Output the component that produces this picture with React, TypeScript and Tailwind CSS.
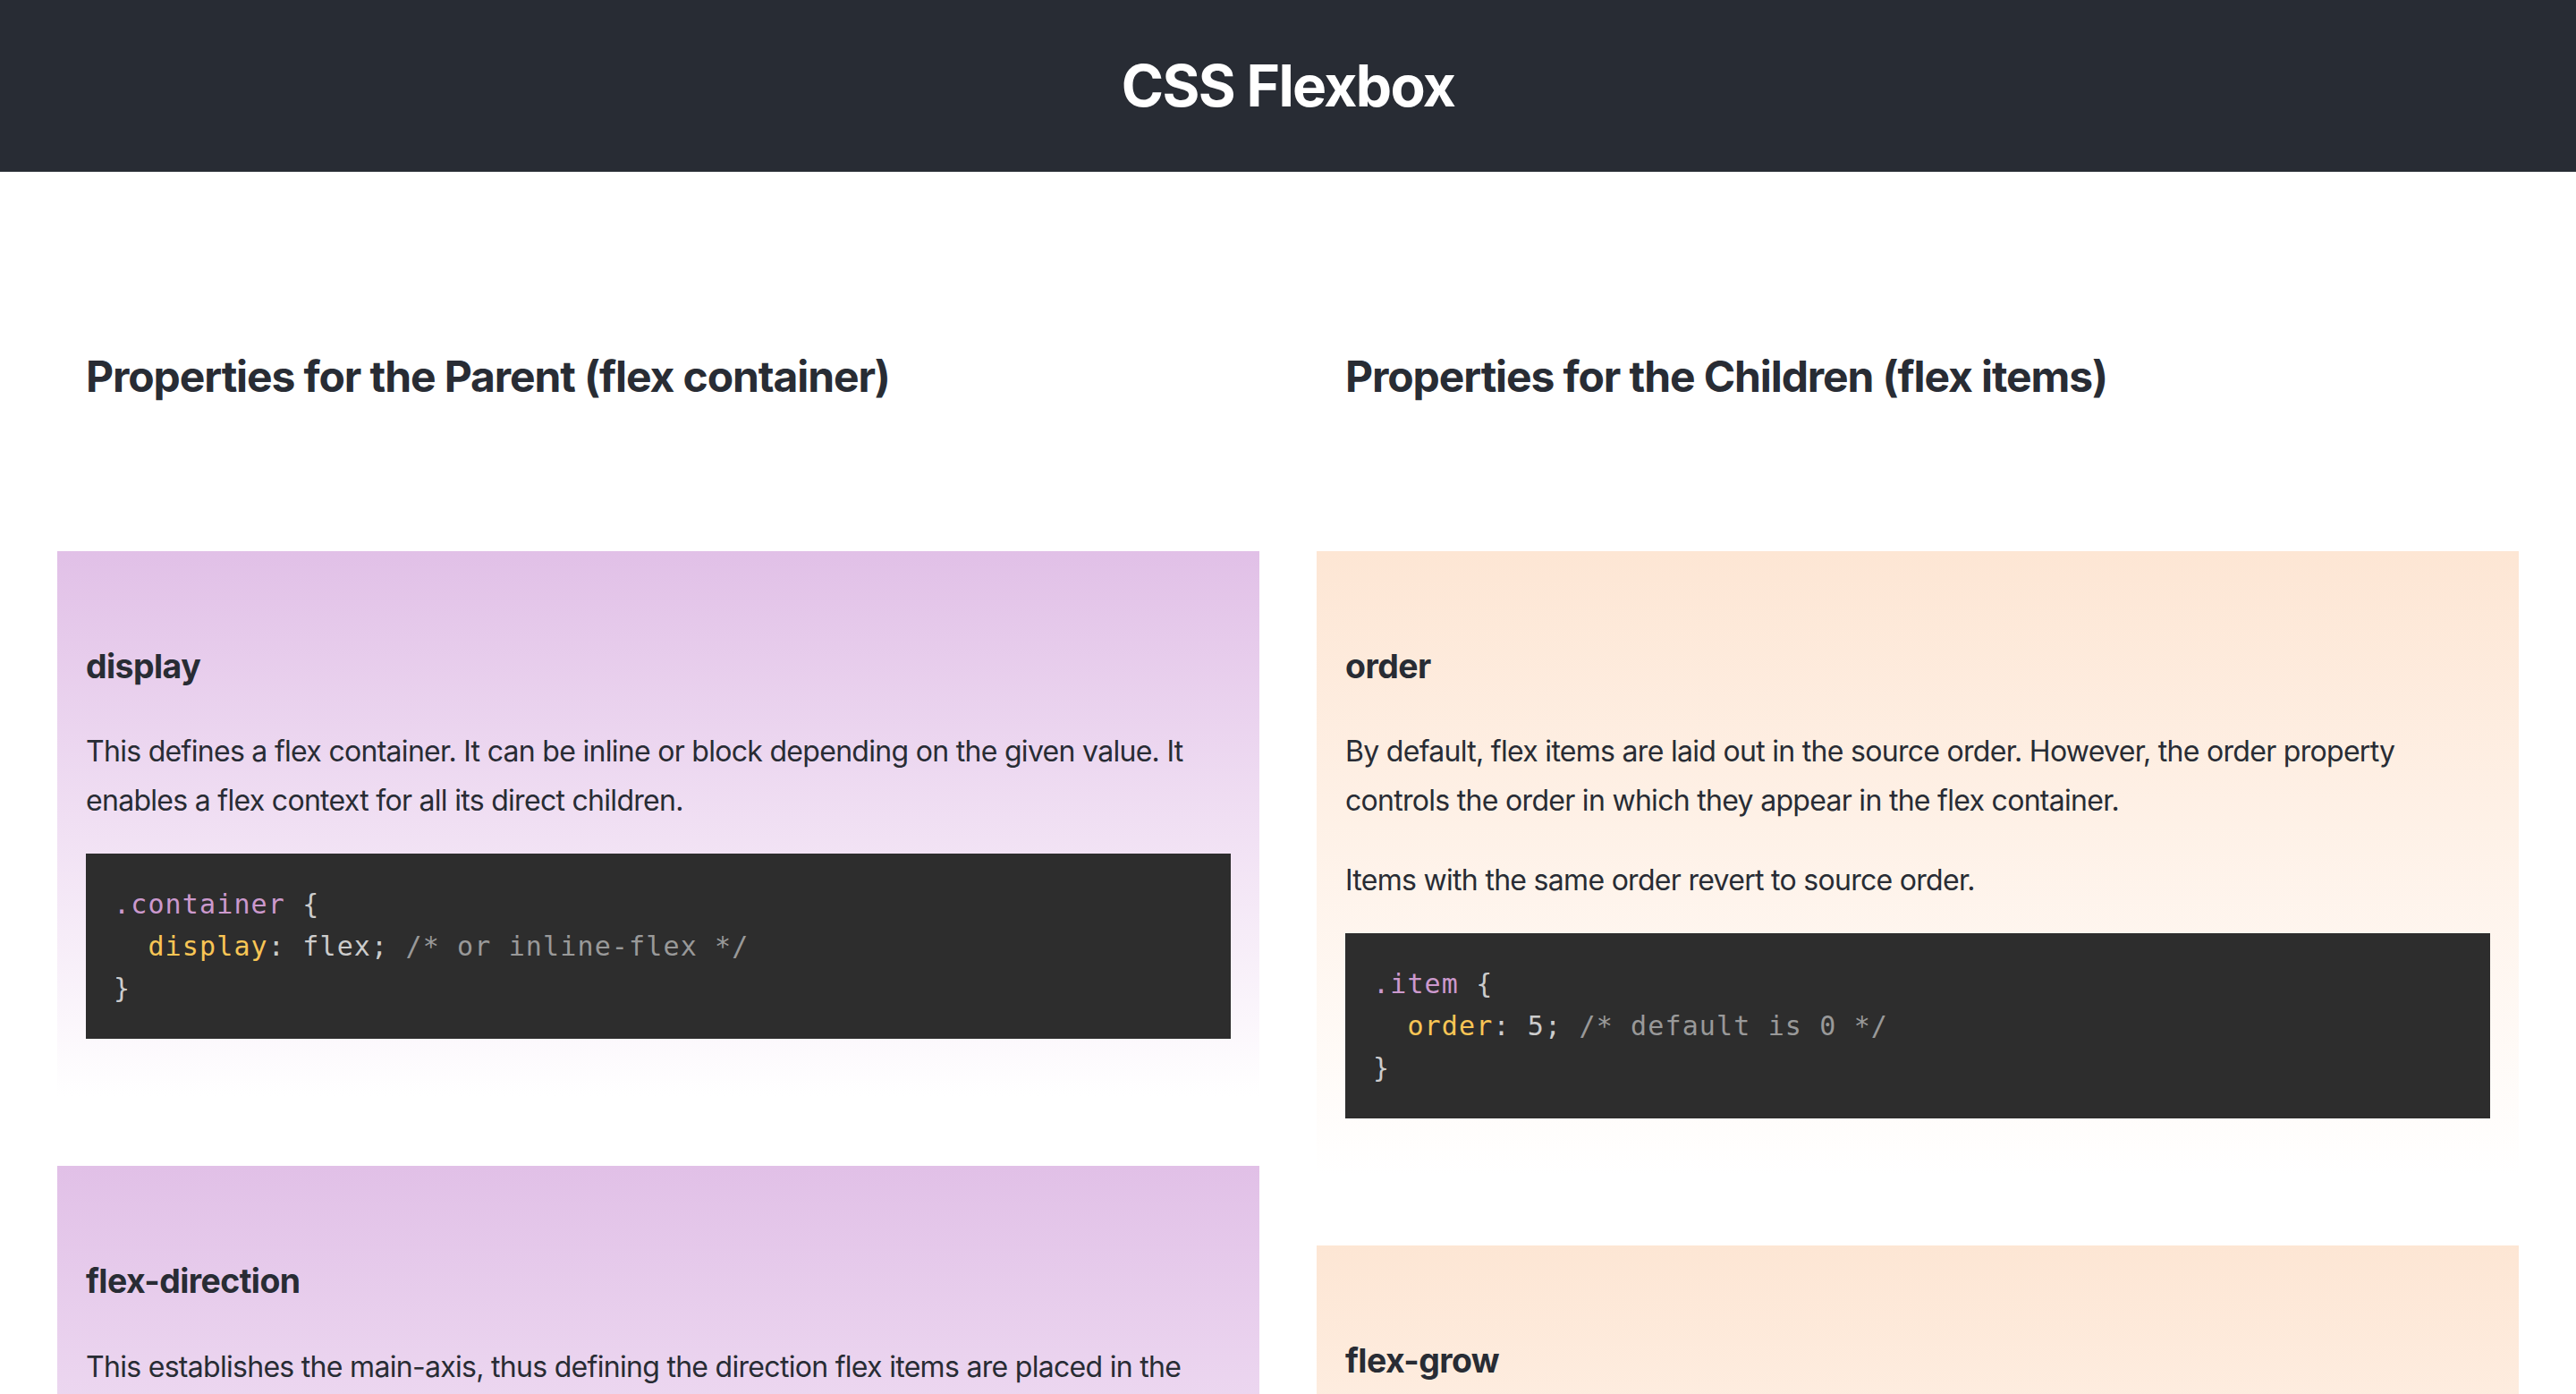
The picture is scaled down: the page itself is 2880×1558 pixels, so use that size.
import React from "react";

type Tok = { t: string; c?: string };

const SEL = "text-[#cc99cd]";
const PROP = "text-[#f8c555]";
const COM = "text-[#999999]";

function Code({ lines }: { lines: Tok[][] }) {
  return (
    <pre
      className="bg-[#2d2d2d] text-[#cccccc] px-[31px] py-[33px] text-[30px] leading-[47px] tracking-[0.038em] whitespace-pre overflow-hidden"
      style={{ fontFamily: '"DejaVu Sans Mono", "Liberation Mono", monospace' }}
    >
      {lines.map((ln, i) => (
        <div key={i}>
          {ln.map((tk, j) => (
            <span key={j} className={tk.c}>
              {tk.t}
            </span>
          ))}
        </div>
      ))}
    </pre>
  );
}

function Card({
  tone,
  title,
  paras,
  code,
}: {
  tone: "purple" | "peach";
  title: string;
  paras: string[];
  code: Tok[][];
}) {
  const bg =
    tone === "purple"
      ? "bg-gradient-to-b from-[#e1c0e7] to-[#ffffff]"
      : "bg-gradient-to-b from-[#fde6d4] to-[#ffffff]";
  return (
    <div className={`${bg} px-[32px] pt-[97px] pb-[64px]`}>
      <h3 className="text-[37.44px] leading-[63.6px] font-bold mb-[37px] text-[#282c34] tracking-[-0.015em]">{title}</h3>
      {paras.map((p, i) => (
        <p
          key={i}
          className={`text-[32px] leading-[54.4px] text-[#282c34] tracking-[-0.022em] ${
            i === paras.length - 1 ? "mb-[32px]" : "mb-[35px]"
          }`}
        >
          {p}
        </p>
      ))}
      <Code lines={code} />
    </div>
  );
}

export default function App() {
  return (
    <div className="min-h-screen bg-white" style={{ fontFamily: 'Inter, "Noto Sans", "Liberation Sans", sans-serif' }}>
      <header className="h-[192px] bg-[#282c34] flex items-center justify-center">
        <h1 className="text-[64px] font-bold text-white leading-none tracking-[-0.026em]">CSS Flexbox</h1>
      </header>
      <main className="grid grid-cols-2 gap-x-[64px] px-[64px]">
        <section className="flex flex-col">
          <h2 className="px-[32px] pt-[188px] mb-[154px] text-[48px] leading-[81.6px] font-bold text-[#282c34] tracking-[-0.023em]">
            Properties for the Parent (flex container)
          </h2>
          <div className="flex flex-col gap-[78px]">
            <Card
              tone="purple"
              title="display"
              paras={[
                "This defines a flex container. It can be inline or block depending on the given value. It enables a flex context for all its direct children.",
              ]}
              code={[
                [{ t: ".container", c: SEL }, { t: " {" }],
                [{ t: "  " }, { t: "display", c: PROP }, { t: ": flex; " }, { t: "/* or inline-flex */", c: COM }],
                [{ t: "}" }],
              ]}
            />
            <Card
              tone="purple"
              title="flex-direction"
              paras={[
                "This establishes the main-axis, thus defining the direction flex items are placed in the flex container. Flexbox is (aside from optional wrapping) a single-direction layout concept. Think of flex items as primarily laying out either in horizontal rows or vertical columns.",
              ]}
              code={[
                [{ t: ".container", c: SEL }, { t: " {" }],
                [{ t: "  " }, { t: "flex-direction", c: PROP }, { t: ": row | row-reverse | column | column-reverse;" }],
                [{ t: "}" }],
              ]}
            />
          </div>
        </section>
        <section className="flex flex-col">
          <h2 className="px-[32px] pt-[188px] mb-[154px] text-[48px] leading-[81.6px] font-bold text-[#282c34] tracking-[-0.023em]">
            Properties for the Children (flex items)
          </h2>
          <div className="flex flex-col gap-[78px]">
            <Card
              tone="peach"
              title="order"
              paras={[
                "By default, flex items are laid out in the source order. However, the order property controls the order in which they appear in the flex container.",
                "Items with the same order revert to source order.",
              ]}
              code={[
                [{ t: ".item", c: SEL }, { t: " {" }],
                [{ t: "  " }, { t: "order", c: PROP }, { t: ": 5; " }, { t: "/* default is 0 */", c: COM }],
                [{ t: "}" }],
              ]}
            />
            <Card
              tone="peach"
              title="flex-grow"
              paras={[
                "This defines the ability for a flex item to grow if necessary. It accepts a unitless value that serves as a proportion. It dictates what amount of the available space inside the flex container the item should take up.",
              ]}
              code={[
                [{ t: ".item", c: SEL }, { t: " {" }],
                [{ t: "  " }, { t: "flex-grow", c: PROP }, { t: ": 4; " }, { t: "/* default 0 */", c: COM }],
                [{ t: "}" }],
              ]}
            />
          </div>
        </section>
      </main>
    </div>
  );
}
